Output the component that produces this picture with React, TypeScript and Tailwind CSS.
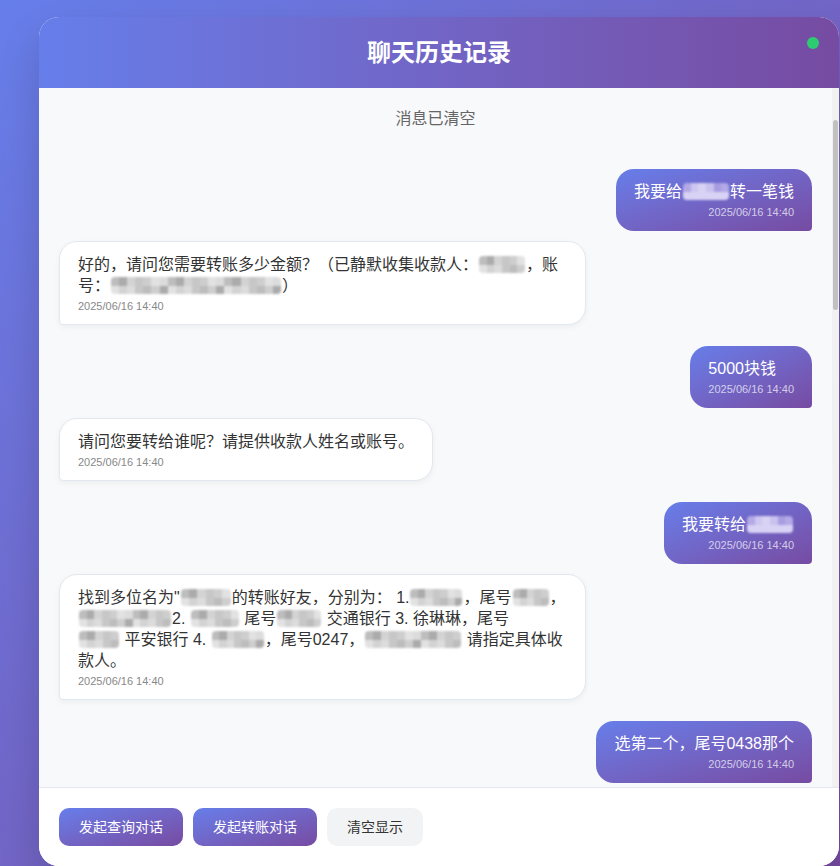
import type { ReactNode } from "react"
import { clsx } from "clsx"

// mosaic cell shades, written out so tailwind picks them up
const grayShades = [
  "bg-[#d3d3d3]",
  "bg-[#bdbdbd]",
  "bg-[#e2e2e2]",
  "bg-[#c7c7c7]",
  "bg-[#ababab]",
  "bg-[#dcdcdc]",
  "bg-[#cecece]",
]
const lightShades = [
  "bg-[#c9c2ee]",
  "bg-[#b3a9e6]",
  "bg-[#d8d2f4]",
  "bg-[#a79de0]",
  "bg-[#cdc6f0]",
]

function Mosaic({ width, light = false }: { width: number; light?: boolean }) {
  const palette = light ? lightShades : grayShades
  const cols = Math.max(2, Math.round(width / 8))
  return (
    <span
      className="mx-[1px] inline-flex h-[17px] translate-y-[2px] overflow-hidden rounded-[4px] align-top blur-[0.8px]"
      style={{ width }}
    >
      {Array.from({ length: cols }).map((_, i) => (
        <span key={i} className="flex h-full flex-1 flex-col">
          <span className={clsx("flex-1", palette[(i * 3 + 1) % palette.length])} />
          <span className={clsx("flex-1", palette[(i * 5 + 2) % palette.length])} />
        </span>
      ))}
    </span>
  )
}

type Message = {
  from: "user" | "bot"
  lines: ReactNode[]
  time: string
  wrapped?: boolean // text wrapped, so the bubble takes its full max width
}

const TIME = "2025/06/16 14:40"

const messages: Message[] = [
  {
    from: "user",
    lines: [
      <>
        我要给<Mosaic width={46} light />转一笔钱
      </>,
    ],
    time: TIME,
  },
  {
    from: "bot",
    wrapped: true,
    lines: [
      <>
        好的，请问您需要转账多少金额？（已静默收集收款人：<Mosaic width={46} />，账
      </>,
      <>
        号：<Mosaic width={170} />）
      </>,
    ],
    time: TIME,
  },
  { from: "user", lines: ["5000块钱"], time: TIME },
  { from: "bot", lines: ["请问您要转给谁呢？请提供收款人姓名或账号。"], time: TIME },
  {
    from: "user",
    lines: [
      <>
        我要转给<Mosaic width={46} light />
      </>,
    ],
    time: TIME,
  },
  {
    from: "bot",
    wrapped: true,
    lines: [
      <>
        找到多位名为"<Mosaic width={50} />的转账好友，分别为： 1.<Mosaic width={52} />，尾号
        <Mosaic width={36} />，
      </>,
      <>
        <Mosaic width={92} />
        2. <Mosaic width={48} /> 尾号<Mosaic width={44} /> 交通银行 3. 徐琳琳，尾号
      </>,
      <>
        <Mosaic width={40} /> 平安银行 4. <Mosaic width={52} />，尾号0247，
        <Mosaic width={96} /> 请指定具体收
      </>,
      <>款人。</>,
    ],
    time: TIME,
  },
  { from: "user", lines: ["选第二个，尾号0438那个"], time: TIME },
]

function Bubble({ msg }: { msg: Message }) {
  const isUser = msg.from === "user"
  return (
    <div className={clsx("flex", isUser ? "mb-[10px] justify-end" : "mb-[21px] justify-start")}>
      <div
        className={clsx(
          "max-w-[70%] rounded-[18px] px-[18px] text-[16px] leading-[21px]",
          msg.wrapped && "w-[70%]",
          isUser
            ? "rounded-br-[4px] bg-gradient-to-br from-[#667eea] to-[#764ba2] py-3 text-white"
            : "rounded-bl-[4px] border border-[#e2e8f0] bg-white pt-3 pb-[11px] text-[#333] shadow-[0_2px_6px_rgba(0,0,0,0.05)]"
        )}
      >
        {msg.lines.map((line, i) => (
          <div key={i} className="h-[21px] whitespace-nowrap">
            {line}
          </div>
        ))}
        <div
          className={clsx(
            "mt-[3px] text-[11px] leading-[14px]",
            isUser ? "text-right text-white/70" : "text-[#888]"
          )}
        >
          {msg.time}
        </div>
      </div>
    </div>
  )
}

function ActionButton({ children, primary = false }: { children: ReactNode; primary?: boolean }) {
  return (
    <button
      type="button"
      className={clsx(
        "rounded-[10px] px-5 py-[10px] text-[14px] leading-[18px]",
        primary
          ? "bg-gradient-to-br from-[#667eea] to-[#764ba2] text-white"
          : "bg-[#f1f3f5] text-[#333]"
      )}
    >
      {children}
    </button>
  )
}

export default function App() {
  return (
    <div className="h-[866px] w-[840px] overflow-hidden bg-gradient-to-br from-[#667eea] to-[#764ba2] pt-[17px] pl-[39px] font-['Liberation_Sans','Noto_Sans_CJK_SC',sans-serif]">
      <div className="flex h-[849px] w-[800px] flex-col overflow-hidden rounded-[20px] bg-white shadow-[0_20px_40px_rgba(0,0,0,0.15)]">
        {/* header */}
        <div className="relative bg-gradient-to-r from-[#667eea] to-[#764ba2] py-5 text-center">
          <h1 className="text-[24px] leading-[31px] font-bold text-white">聊天历史记录</h1>
          <span className="absolute top-5 right-5 h-3 w-3 rounded-full bg-[#2ecc71]" />
        </div>

        {/* messages */}
        <div className="relative min-h-0 flex-1 overflow-hidden bg-[#f8f9fa]">
          <div className="pt-5 pr-[27px] pl-5">
            <div className="mb-[40px] text-center text-[16px] leading-[21px] text-[#666]">消息已清空</div>
            {messages.map((m, i) => (
              <Bubble key={i} msg={m} />
            ))}
          </div>
          {/* scrollbar */}
          <div className="absolute top-0 right-0 bottom-0 w-[7px] bg-[#f1f1f1]">
            <div className="absolute top-[32px] right-[1px] left-[1px] h-[190px] rounded-full bg-[#c1c1c1]" />
          </div>
        </div>

        {/* footer */}
        <div className="flex gap-[10px] border-t border-[#e2e8f0] bg-white p-5">
          <ActionButton primary>发起查询对话</ActionButton>
          <ActionButton primary>发起转账对话</ActionButton>
          <ActionButton>清空显示</ActionButton>
        </div>
      </div>
    </div>
  )
}
